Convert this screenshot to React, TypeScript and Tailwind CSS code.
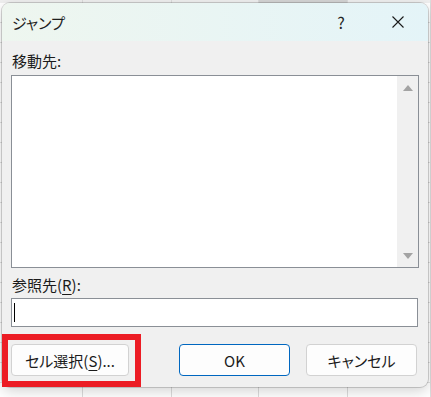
import React from "react";

const font = "[font-family:'Noto_Sans_CJK_JP','Noto_Sans',sans-serif] [font-feature-settings:'palt']";

export default function App() {
  const cols = [83, 89, 87, 89, 83];
  return (
    <div className={`relative w-[431px] h-[397px] overflow-hidden bg-white ${font}`}>
      {/* spreadsheet backdrop */}
      <div className="absolute inset-0 flex bg-[repeating-linear-gradient(to_bottom,transparent_0px,transparent_1px,#e2e2e2_1px,#e2e2e2_2px,transparent_2px,transparent_20px)] bg-[position:0_1px]">
        {cols.map((w, i) => (
          <div key={i} style={{ width: w }} className="shrink-0 h-full border-r border-[#dcdcdc] flex flex-col">
            <div className={`h-[3px] ${i === 3 ? "bg-[#d4d4d4]" : "bg-[#efefef]"}`} />
          </div>
        ))}
      </div>

      {/* dialog window */}
      <div className="absolute left-[2px] top-[3px] w-[426px] h-[384px] rounded-[8px] bg-[#f0f0f0] overflow-hidden shadow-[0_0_0_1px_rgba(0,0,0,0.16),0_4px_14px_rgba(0,0,0,0.18)] flex flex-col text-[#1b1b1b]">
        {/* title bar */}
        <div className="h-[38px] shrink-0 flex items-center bg-[linear-gradient(to_right,#eef6ef,#e4f4f8)]">
          <span className="pl-[10px] text-[15px] leading-[20px] mt-[1px] text-[#1f1f1f]">ジャンプ</span>
          <div className="ml-auto flex items-center">
            <div className="w-[46px] h-[38px] flex items-center justify-center text-[16px] leading-none text-[#222]">?</div>
            <div className="w-[46px] h-[38px] ml-[11px] mr-[7px] flex items-center justify-center">
              <svg width="12" height="12" viewBox="0 0 12 12">
                <path d="M0.5 0.5 L11.5 11.5 M11.5 0.5 L0.5 11.5" stroke="#1a1a1a" strokeWidth="1.1" fill="none" />
              </svg>
            </div>
          </div>
        </div>

        {/* body */}
        <div className="flex flex-col px-[9px] pt-[10px]">
          <div className="h-[20px] pl-[1px] text-[15px] leading-[20px]">移動先:</div>
          <div className="mt-[4px] h-[193px] border border-[#8a8f96] bg-white flex">
            <div className="flex-1" />
            <div className="w-[21px] bg-[#f0f0f0] flex flex-col items-center justify-between pt-[9px] pb-[8px]">
              <svg width="10" height="6" viewBox="0 0 10 6"><path d="M5 0 L10 6 L0 6 Z" fill="#a3a3a3" /></svg>
              <svg width="10" height="6" viewBox="0 0 10 6"><path d="M0 0 L10 0 L5 6 Z" fill="#a3a3a3" /></svg>
            </div>
          </div>
          <div className="mt-[7px] h-[20px] pl-[1px] text-[15px] leading-[20px]">
            参照先(<span className="underline underline-offset-[3px] decoration-[1px]">R</span>):
          </div>
          <div className="mt-[3px] h-[29px] w-[407px] border border-[#8a8f96] bg-white flex items-center pl-[2px]">
            <span className="w-[1px] h-[19px] bg-black" />
          </div>
          <div className="mt-[17px] h-[32px] flex">
            <button className="w-[118px] h-[32px] rounded-[4px] border border-[#d2d2d2] bg-[#fdfdfd] text-[15px] leading-none flex items-center justify-center">
              セル選択(<span className="underline underline-offset-[3px] decoration-[1px]">S</span>)...
            </button>
            <button className="ml-[50px] w-[111px] h-[32px] rounded-[4px] border border-[#0067c0] bg-[#fdfdfd] text-[15px] leading-none flex items-center justify-center">
              OK
            </button>
            <button className="ml-[16px] w-[111px] h-[32px] rounded-[4px] border border-[#d2d2d2] bg-[#fdfdfd] text-[15px] leading-none flex items-center justify-center">
              キャンセル
            </button>
          </div>
        </div>
      </div>

      {/* red annotation box */}
      <div className="absolute left-[2px] top-[334px] w-[139px] h-[53px] border-[6px] border-[#ec1c24]" />
    </div>
  );
}
